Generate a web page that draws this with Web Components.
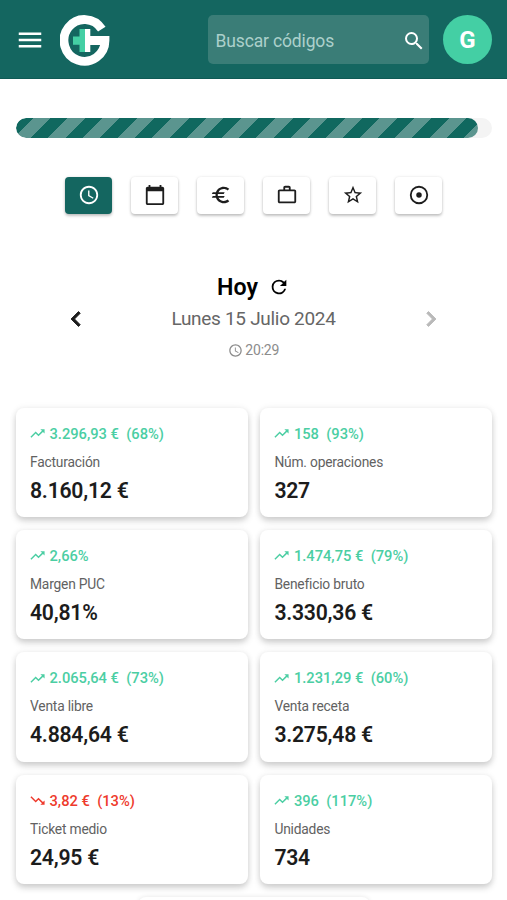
<!DOCTYPE html>
<html lang="es">
<head>
<meta charset="utf-8">
<title>Panel</title>
<style>
html,body{margin:0;height:900px;overflow:hidden;background:#fff}
body{font-family:Roboto,"Liberation Sans",sans-serif;color:#1c1c1c}
</style>
</head>
<body>
<dash-page></dash-page>
<script>
const ICONS = {
  menu:'<path d="M3 18h18v-2H3v2zm0-5h18v-2H3v2zm0-7v2h18V6H3z"/>',
  search:'<path d="M15.5 14h-.79l-.28-.27A6.47 6.47 0 0 0 16 9.5 6.5 6.5 0 1 0 9.5 16c1.61 0 3.09-.59 4.23-1.57l.27.28v.79l5 4.99L20.49 19l-4.99-5zm-6 0a4.5 4.5 0 1 1 0-9 4.5 4.5 0 0 1 0 9z"/>',
  clock:'<path d="M11.99 2C6.47 2 2 6.48 2 12s4.47 10 9.99 10C17.52 22 22 17.52 22 12S17.52 2 11.99 2zM12 20a8 8 0 1 1 0-16 8 8 0 0 1 0 16zm.5-13H11v6l5.25 3.15.75-1.23-4.5-2.67z"/>',
  calendar:'<path d="M20 3h-1V1h-2v2H7V1H5v2H4c-1.1 0-2 .9-2 2v16c0 1.1.9 2 2 2h16c1.1 0 2-.9 2-2V5c0-1.1-.9-2-2-2zm0 18H4V8h16v13z"/>',
  euro:'<path d="M15 18.5c-2.51 0-4.68-1.42-5.76-3.5H15l1-2H8.58c-.05-.33-.08-.66-.08-1s.03-.67.08-1H15l1-2H9.24A6.49 6.49 0 0 1 15 5.5c1.61 0 3.09.59 4.23 1.57L21 5.3A8.96 8.96 0 0 0 15 3c-3.92 0-7.24 2.51-8.48 6H3l-1 2h4.06a8.3 8.3 0 0 0 0 2H3l-1 2h4.52c1.24 3.49 4.56 6 8.48 6 2.31 0 4.41-.87 6-2.3l-1.78-1.77c-1.13.98-2.6 1.57-4.22 1.57z"/>',
  case:'<path d="M14 6V4h-4v2h4zM4 8v11h16V8H4zm16-2c1.11 0 2 .89 2 2v11c0 1.11-.89 2-2 2H4c-1.11 0-2-.89-2-2l.01-11c0-1.11.88-2 1.99-2h4V4c0-1.11.89-2 2-2h4c1.11 0 2 .89 2 2v2h4z"/>',
  star:'<path d="m22 9.24-7.19-.62L12 2 9.19 8.63 2 9.24l5.46 4.73L5.82 21 12 17.27 18.18 21l-1.63-7.03L22 9.24zM12 15.4l-3.76 2.27 1-4.28-3.32-2.88 4.38-.38L12 6.1l1.71 4.04 4.38.38-3.32 2.88 1 4.28L12 15.4z"/>',
  target:'<path d="M12 2a10 10 0 1 0 0 20 10 10 0 0 0 0-20zm0 18a8 8 0 1 1 0-16 8 8 0 0 1 0 16z"/><circle cx="12" cy="12" r="3"/>',
  refresh:'<path d="M17.65 6.35A7.96 7.96 0 0 0 12 4a8 8 0 1 0 7.73 10h-2.08A6 6 0 1 1 12 6c1.66 0 3.14.69 4.22 1.78L13 11h7V4l-2.35 2.35z"/>',
  left:'<path d="M15.41 7.41 14 6l-6 6 6 6 1.41-1.41L10.83 12z"/>',
  right:'<path d="M10 6 8.59 7.41 13.17 12l-4.58 4.59L10 18l6-6z"/>',
  up:'<path d="m16 6 2.29 2.29-4.88 4.88-4-4L2 16.59 3.41 18l6-6 4 4 6.3-6.29L22 12V6z"/>',
  down:'<path d="m16 18 2.29-2.29-4.88-4.88-4 4L2 7.41 3.41 6l6 6 4-4 6.3 6.29L22 12v6z"/>'
};
const define = (name, render) => customElements.define(name, class extends HTMLElement {
  constructor(){ super(); this.attachShadow({mode:'open'}); }
  connectedCallback(){ this.shadowRoot.innerHTML = render(this); }
});

define('ui-icon', el => `<style>
:host{display:block;flex:none;width:var(--s,24px);height:var(--s,24px)}
svg{display:block;width:100%;height:100%;fill:currentColor}
</style><svg viewBox="0 0 24 24">${ICONS[el.getAttribute('name')]}</svg>`);

define('brand-logo', () => `<style>
:host{display:block;flex:none;width:50px;height:51px}
svg{display:block}
</style><svg width="50" height="51" viewBox="0 0 50 51">
<path d="M41.800 14.200A20.500 20.900 0 1 0 45 25.500H29" fill="none" stroke="#fff" stroke-width="8.800"/>
<path d="M25 14h5.300v7.100H49v8.800H30.300v7H25z" fill="#fff"/>
<path d="M19.500 14H25v23h-5.500v-7.200H13v-8.400h6.500z" fill="#44cfa4"/></svg>`);

define('search-box', () => `<style>
:host{display:flex;align-items:center;justify-content:space-between;box-sizing:border-box;width:220.500px;height:49px;padding:0 3px 0 7.500px;border-radius:5px;background:#3a7d77;color:#fff}
span{font-size:17.500px;letter-spacing:-.15px;color:#acd0cb;padding-top:3px}
ui-icon{--s:24px;padding-top:2px}
</style><span><slot></slot></span><ui-icon name="search"></ui-icon>`);

define('user-avatar', () => `<style>
:host{display:flex;align-items:center;justify-content:center;width:49px;height:49px;border-radius:50%;background:#44cfa4;color:#fff;font-weight:700;font-size:24px}
</style><slot></slot>`);

define('app-bar', () => `<style>
:host{display:flex;align-items:center;box-sizing:border-box;height:79px;padding:1px 15px 0 15px;background:#146660;color:#fff;border-bottom:1px solid #0f5a55}
ui-icon{--s:30px;padding-top:1px}
brand-logo{margin-left:14.500px;padding-top:1px}
search-box{margin-left:auto;margin-right:14.500px}
</style><ui-icon name="menu"></ui-icon><brand-logo></brand-logo><search-box>Buscar códigos</search-box><user-avatar>G</user-avatar>`);

define('progress-bar', () => `<style>
:host{display:block;height:19.500px;border-radius:10px;background:#f4f4f4;overflow:hidden}
div{height:100%;width:97.1%;border-radius:10px;background:repeating-linear-gradient(135deg,#10685f 0 12.250px,#5b958f 12.250px 24.500px)}
</style><div></div>`);

define('tab-button', el => `<style>
:host{display:flex;align-items:center;justify-content:center;width:47px;height:37px;border-radius:4px;background:#fff;color:#1d1d1d;box-shadow:0 2px 3px rgba(0,0,0,.22),0 0 3px rgba(0,0,0,.1)}
:host([active]){background:#146660;color:#fff}
ui-icon{--s:22px}
</style><ui-icon name="${el.getAttribute('icon')}"></ui-icon>`);

define('tab-row', () => `<style>
:host{display:flex;justify-content:center;gap:19px}
</style><slot></slot>`);

define('date-nav', () => `<style>
:host{display:grid;grid-template-columns:30px 1fr 30px;align-items:center;padding:0 61px}
.c{display:flex;flex-direction:column;align-items:center}
.t{display:flex;align-items:center;gap:10px;height:30px;font-size:23.200px;font-weight:600;color:#000}
.t ui-icon{--s:22px}
.d{height:34px;line-height:33px;font-size:19px;letter-spacing:-.3px;color:#666}
.h{display:flex;align-items:center;gap:2.500px;height:28px;font-size:14px;letter-spacing:-.2px;color:#8c8c8c;margin-bottom:2px}
.h ui-icon{--s:15px}
.a{--s:30px;stroke:currentColor;stroke-width:.7}
.n{color:#b9b9b9}
</style><ui-icon class="a" name="left"></ui-icon>
<div class="c"><div class="t"><span>Hoy</span><ui-icon name="refresh"></ui-icon></div><div class="d">Lunes 15 Julio 2024</div><div class="h"><ui-icon name="clock"></ui-icon><span>20:29</span></div></div>
<ui-icon class="a n" name="right"></ui-icon>`);

define('stat-card', el => {
  const g = n => el.getAttribute(n) || '';
  return `<style>
:host{display:block;box-sizing:border-box;height:109.500px;padding:17px 14.500px 0;border-radius:8px;background:#fff;box-shadow:0 4px 6px rgba(0,0,0,.17),0 0 7px rgba(0,0,0,.07)}
.t{display:flex;align-items:center;height:18px;font-size:14.700px;font-weight:500;color:#4bcea3;white-space:pre}
.t.down{color:#ee3a2c}
.t ui-icon{--s:17px;margin:0 3.500px 0 -1px}
.l{height:20px;margin-top:9px;line-height:20px;font-size:13.800px;letter-spacing:-.2px;color:#626262}
.v{height:28px;margin-top:5px;line-height:28px;font-size:21.200px;letter-spacing:-.25px;font-weight:600;color:#1c1c1c}
</style><div class="t ${g('trend')}"><ui-icon name="${g('trend')||'up'}"></ui-icon><span>${g('delta')}</span></div><div class="l">${g('label')}</div><div class="v">${g('value')}</div>`;
});

define('stat-grid', () => `<style>
:host{display:grid;grid-template-columns:1fr 1fr;gap:12.900px 12.300px}
::slotted(.mid){grid-column:1/3;justify-self:center;width:232px}
</style><slot></slot>`);

define('dash-page', () => `<style>
:host{display:block;height:900px;overflow:hidden;background:#fff}
main{padding:39px 15px 0 15.500px}
tab-row{margin-top:39px}
date-nav{margin:58.500px -15px 0 -15.500px}
stat-grid{margin-top:41.500px}
</style><app-bar></app-bar><main>
<progress-bar></progress-bar>
<tab-row><tab-button active icon="clock"></tab-button><tab-button icon="calendar"></tab-button><tab-button icon="euro"></tab-button><tab-button icon="case"></tab-button><tab-button icon="star"></tab-button><tab-button icon="target"></tab-button></tab-row>
<date-nav></date-nav>
<stat-grid>
<stat-card trend="up" delta="3.296,93 €  (68%)" label="Facturación" value="8.160,12 €"></stat-card>
<stat-card trend="up" delta="158  (93%)" label="Núm. operaciones" value="327"></stat-card>
<stat-card trend="up" delta="2,66%" label="Margen PUC" value="40,81%"></stat-card>
<stat-card trend="up" delta="1.474,75 €  (79%)" label="Beneficio bruto" value="3.330,36 €"></stat-card>
<stat-card trend="up" delta="2.065,64 €  (73%)" label="Venta libre" value="4.884,64 €"></stat-card>
<stat-card trend="up" delta="1.231,29 €  (60%)" label="Venta receta" value="3.275,48 €"></stat-card>
<stat-card trend="down" delta="3,82 €  (13%)" label="Ticket medio" value="24,95 €"></stat-card>
<stat-card trend="up" delta="396  (117%)" label="Unidades" value="734"></stat-card>
<blank-card class="mid"></blank-card>
</stat-grid></main>`);

define('blank-card', () => `<style>
:host{display:block;height:20px;border-radius:8px;background:#fff;box-shadow:0 0 5px rgba(0,0,0,.1)}
</style>`);
</script>
</body>
</html>
